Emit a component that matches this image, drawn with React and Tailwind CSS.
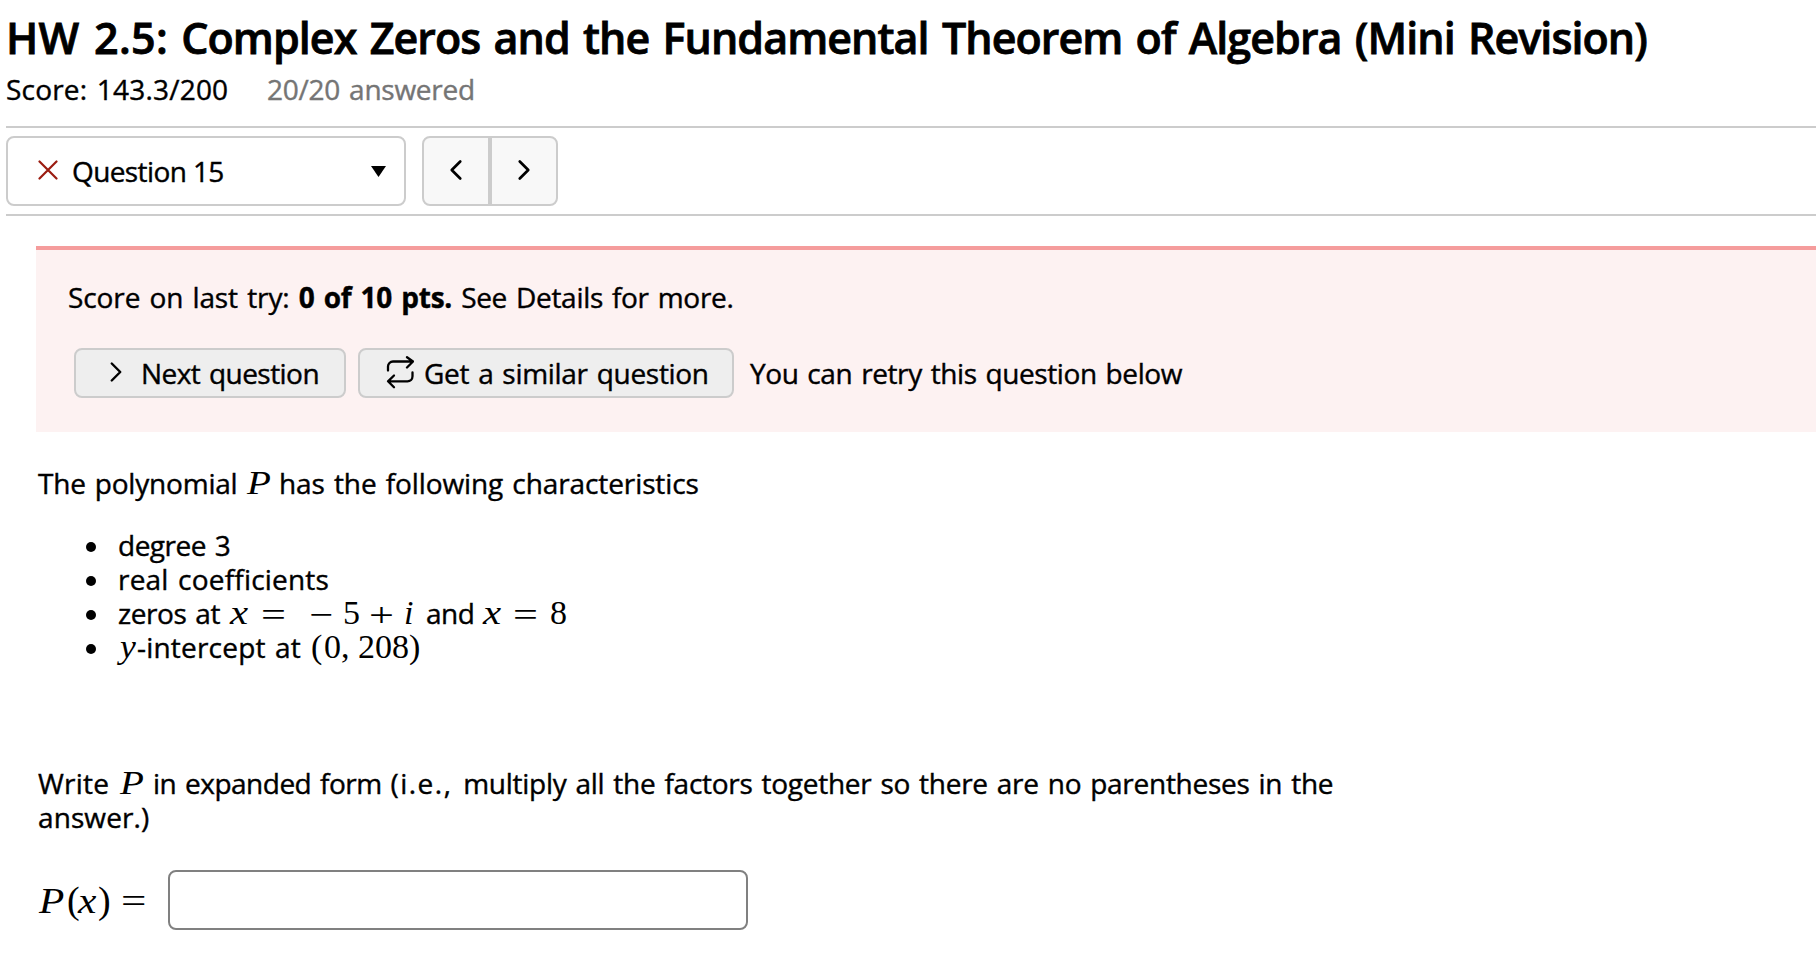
import { ChevronLeft, ChevronRight } from 'lucide-react';

function Sym({ className = '', children }) {
  return (
    <span className={`inline-block origin-left font-['Liberation_Serif',serif] text-[34px] leading-8 tracking-normal whitespace-nowrap [-webkit-text-stroke:0px] ${className}`}>
      {children}
    </span>
  );
}

function Bullet({ children }) {
  return (
    <li className="flex h-[34px] items-baseline whitespace-nowrap">
      <span className="mr-[22px] h-[10px] w-[10px] translate-y-0.5 self-center rounded-full bg-black" />
      {children}
    </li>
  );
}

function RepeatIcon() {
  return (
    <svg width="28" height="34" viewBox="0 0 28 34" fill="none" stroke="currentColor" strokeWidth="2.3" strokeLinecap="round" strokeLinejoin="round">
      <path d="M2 14.500v-4a5 5 0 0 1 5-5H27M21 1.200l6 4.300-6 6" />
      <path d="M26.500 16.500v3.800a5 5 0 0 1-5 5H2M8 19.500l-6 5.800 6 6" />
    </svg>
  );
}

export default function App() {
  return (
    <div className="h-[962px] w-full overflow-hidden bg-white pt-[11px] pl-[6px] font-['Open_Sans',sans-serif] text-[28px] leading-[34px] tracking-[-0.2px] text-black [word-spacing:2px] [-webkit-text-stroke:0.4px]">
      <h1 className="text-[43px] leading-[54px] font-semibold tracking-[-0.93px] whitespace-nowrap [-webkit-text-stroke:0.8px] [word-spacing:3px]">
        <span className="tracking-[0.3px]">HW 2.5:</span> Complex Zeros and the Fundamental Theorem of Algebra (Mini Revision)
      </h1>
      <div className="mt-[7px] flex whitespace-nowrap">
        <span className="w-[261px] tracking-[0.2px]">Score: 143.3/200</span>
        <span className="tracking-[-0.25px] text-[#757575]">20/20 answered</span>
      </div>

      <div className="mt-5 flex h-[90px] gap-4 border-y-2 border-[#ccc] py-2">
        <button className="flex w-[400px] items-center rounded-lg border-2 border-[#ccc] pr-[18px] pl-[30px] tracking-[-0.6px]">
          <svg width="20" height="20" viewBox="0 0 20 20" stroke="#9b1c10" strokeWidth="2.2" strokeLinecap="round" className="mr-[14px] mb-0.5">
            <path d="M1.500 1.500l17 17M18.500 1.500L1.500 18.500" />
          </svg>
          <span>Question 15</span>
          <svg width="15" height="11" viewBox="0 0 15 11" className="ml-auto">
            <path d="M0 0h15l-7.500 11z" />
          </svg>
        </button>
        <div className="flex">
          <button className="flex w-[68px] items-center justify-center rounded-l-lg border-2 border-[#ccc] bg-[#f8f8f8] pb-0.5">
            <ChevronLeft size={34} strokeWidth={1.9} />
          </button>
          <button className="flex w-[68px] items-center justify-center rounded-r-lg border-2 border-[#ccc] bg-[#f8f8f8] pb-0.5">
            <ChevronRight size={34} strokeWidth={1.9} />
          </button>
        </div>
      </div>

      <section className="mt-[30px] ml-[30px] h-[186px] border-t-4 border-[#f59c9c] bg-[#fdf2f2] pt-[30px] pl-8 whitespace-nowrap">
        <p>
          <span className="tracking-[-0.1px]">Score on last try: </span>
          <b className="font-bold">0 of 10 pts.</b>
          <span className="tracking-[-0.3px]"> See Details for more.</span>
        </p>
        <div className="mt-[34px] ml-[6px] flex items-center">
          <button className="flex h-[50px] w-[272px] items-center rounded-lg border-2 border-[#ccc] bg-[#eee] pl-[23px]">
            <ChevronRight size={34} strokeWidth={1.7} className="mr-2 mb-[3px]" />
            <span className="tracking-[-0.55px] [word-spacing:2px]">Next question</span>
          </button>
          <button className="ml-3 flex h-[50px] w-[376px] items-center rounded-lg border-2 border-[#ccc] bg-[#eee] pl-[26px]">
            <RepeatIcon />
            <span className="ml-[10px] tracking-[-0.3px] [word-spacing:2px]">Get a similar question</span>
          </button>
          <span className="ml-4 tracking-[-0.4px]">You can retry this question below</span>
        </div>
      </section>

      <main className="pl-8">
        <p className="mt-[34px] flex h-[34px] items-baseline whitespace-nowrap">
          <span className="w-[209px]">The polynomial</span>
          <Sym className="w-8 scale-x-115 italic">P</Sym>
          <span className="tracking-[-0.1px]">has the following characteristics</span>
        </p>
        <ul className="mt-7 ml-12">
          <Bullet><span className="tracking-[-0.5px]">degree 3</span></Bullet>
          <Bullet><span className="tracking-[0.2px]">real coefficients</span></Bullet>
          <Bullet>
            <span className="w-[112px] tracking-[-0.4px]">zeros at</span>
            <Sym className="w-[31px] scale-x-120 italic">x</Sym>
            <Sym className="w-12 translate-y-0.5 scale-x-130">=</Sym>
            <Sym className="w-[34px] translate-y-0.5 scale-x-125">−</Sym>
            <Sym className="w-[26px]">5</Sym>
            <Sym className="w-[35px] translate-y-0.5 scale-x-130">+</Sym>
            <Sym className="w-[22px] italic">i</Sym>
            <span className="w-[57px] tracking-[-0.5px]">and</span>
            <Sym className="w-[30px] scale-x-120 italic">x</Sym>
            <Sym className="w-[37px] translate-y-0.5 scale-x-130">=</Sym>
            <Sym>8</Sym>
          </Bullet>
          <Bullet>
            <Sym className="ml-0.5 w-[17px] scale-x-105 italic">y</Sym>
            <span className="w-[174px] tracking-[0.2px]">-intercept at</span>
            <Sym className="w-[13px]">(</Sym>
            <Sym className="w-[34px]">0,</Sym>
            <Sym>208</Sym>
            <Sym>)</Sym>
          </Bullet>
        </ul>
        <div className="mt-[102px] h-[68px] whitespace-nowrap">
          <p className="flex h-[34px] items-baseline">
            <span className="w-[82px] tracking-[0.2px]">Write</span>
            <Sym className="w-[33px] scale-x-115 italic">P</Sym>
            <span className="tracking-[-0.27px]">
              <span className="tracking-[-0.5px]">in expanded form </span>
              <span className="tracking-[1.5px]">(i.e., </span>
              multiply all the factors together so there are no parentheses in the
            </span>
          </p>
          <p className="tracking-[0.1px]">answer.)</p>
        </div>
        <div className="mt-9 flex h-[60px] items-center">
          <div className="flex w-[130px] items-baseline pl-px">
            <Sym className="w-[28px] scale-x-115 text-[36px] italic">P</Sym>
            <Sym className="w-[11px] text-[38px]">(</Sym>
            <Sym className="w-[20px] scale-x-115 text-[36px] italic">x</Sym>
            <Sym className="w-[23px] text-[38px]">)</Sym>
            <Sym className="scale-x-125 text-[36px]">=</Sym>
          </div>
          <input type="text" className="h-[60px] w-[580px] rounded-lg border-2 border-[#808080] bg-white px-3" />
        </div>
      </main>
    </div>
  );
}
